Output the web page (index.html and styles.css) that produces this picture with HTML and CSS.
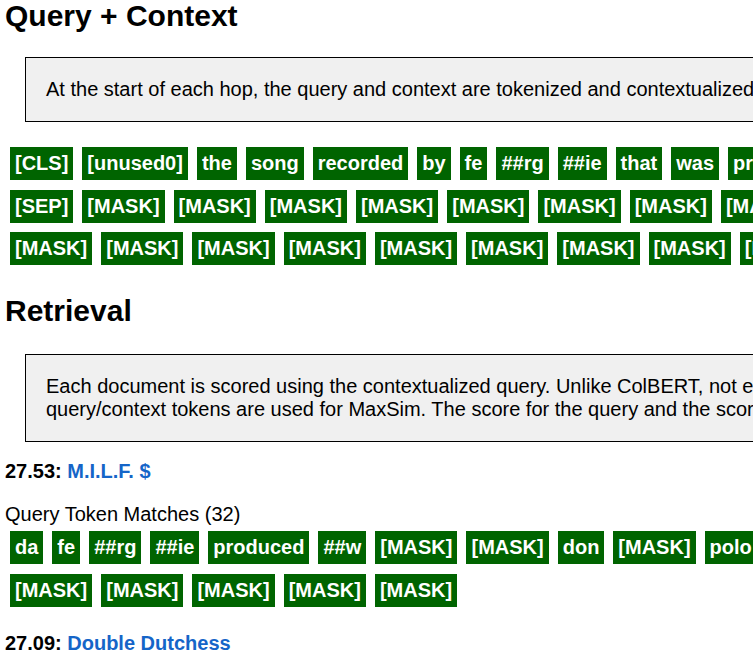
FILE: index.html
```html
<!DOCTYPE html>
<html lang="en">
<head>
<meta charset="utf-8">
<title>Query + Context</title>
<link rel="stylesheet" href="styles.css">
</head>
<body>
<main class="page">
  <h2 class="title title-first">Query + Context</h2>
  <div class="note">At the start of each hop, the query and context are tokenized and contextualized by the encoder before retrieval.</div>
  <div class="tokens tokens-query">
    <div class="row">
      <span class="tok">[CLS]</span><span class="tok">[unused0]</span><span class="tok">the</span><span class="tok">song</span><span class="tok">recorded</span><span class="tok">by</span><span class="tok">fe</span><span class="tok">##rg</span><span class="tok">##ie</span><span class="tok">that</span><span class="tok">was</span><span class="tok">produced</span><span class="tok">by</span><span class="tok">polo</span><span class="tok">##w</span><span class="tok">da</span><span class="tok">don</span>
    </div>
    <div class="row">
      <span class="tok">[SEP]</span><span class="tok">[MASK]</span><span class="tok">[MASK]</span><span class="tok">[MASK]</span><span class="tok">[MASK]</span><span class="tok">[MASK]</span><span class="tok">[MASK]</span><span class="tok">[MASK]</span><span class="tok">[MASK]</span><span class="tok">[MASK]</span><span class="tok">[MASK]</span>
    </div>
    <div class="row">
      <span class="tok">[MASK]</span><span class="tok">[MASK]</span><span class="tok">[MASK]</span><span class="tok">[MASK]</span><span class="tok">[MASK]</span><span class="tok">[MASK]</span><span class="tok">[MASK]</span><span class="tok">[MASK]</span><span class="tok">[MASK]</span><span class="tok">[MASK]</span><span class="tok">[MASK]</span>
    </div>
  </div>

  <h2 class="title title-next">Retrieval</h2>
  <div class="note">Each document is scored using the contextualized query. Unlike ColBERT, not every one of the<br>query/context tokens are used for MaxSim. The score for the query and the score for the context are summed.</div>

  <div class="result">
    <div class="score">27.53: <a class="doc" href="#">M.I.L.F. $</a></div>
    <div class="label">Query Token Matches (32)</div>
    <div class="tokens tokens-match">
      <div class="row">
        <span class="tok">da</span><span class="tok">fe</span><span class="tok">##rg</span><span class="tok">##ie</span><span class="tok">produced</span><span class="tok">##w</span><span class="tok">[MASK]</span><span class="tok">[MASK]</span><span class="tok">don</span><span class="tok">[MASK]</span><span class="tok">polo</span><span class="tok">[MASK]</span><span class="tok">[MASK]</span>
      </div>
      <div class="row">
        <span class="tok">[MASK]</span><span class="tok">[MASK]</span><span class="tok">[MASK]</span><span class="tok">[MASK]</span><span class="tok">[MASK]</span>
      </div>
    </div>
  </div>

  <div class="result result-next">
    <div class="score">27.09: <a class="doc" href="#">Double Dutchess</a></div>
    <div class="label">Query Token Matches (30)</div>
  </div>
</main>
</body>
</html>
```
FILE: styles.css
```css
html {
  overflow: hidden;
}

body {
  margin: 0;
  padding: 0 5px;
  font-family: "Liberation Sans", Arial, sans-serif;
  font-size: 20px;
  line-height: 23px;
  color: #000;
  background: #fff;
}

.page {
  width: 1400px;
}

.title {
  font-size: 30px;
  font-weight: bold;
  line-height: 32px;
  margin: 30px 0 27px;
}

.title-first {
  margin: 0 0 25px;
}

.note {
  margin-left: 20px;
  width: 1100px;
  padding: 20px;
  background: #f0f0f0;
  border: 1px solid #000;
  white-space: nowrap;
}

.tokens {
  display: flex;
  flex-direction: column;
  margin-left: 5px;
}

.tokens-query {
  margin-top: 25px;
  row-gap: 9.5px;
}

.tokens-match {
  margin-top: 5px;
  row-gap: 10px;
}

.row {
  display: flex;
  gap: 9px;
  white-space: nowrap;
}

.tok {
  flex: none;
  background: #006400;
  color: #fff;
  font-weight: bold;
  padding: 5px;
  line-height: 23px;
}

.result {
  margin-top: 18px;
}

.result-next {
  margin-top: 25px;
}

.score {
  font-weight: bold;
}

.doc {
  color: #1565c8;
  text-decoration: none;
}

.label {
  margin-top: 20px;
}
```
